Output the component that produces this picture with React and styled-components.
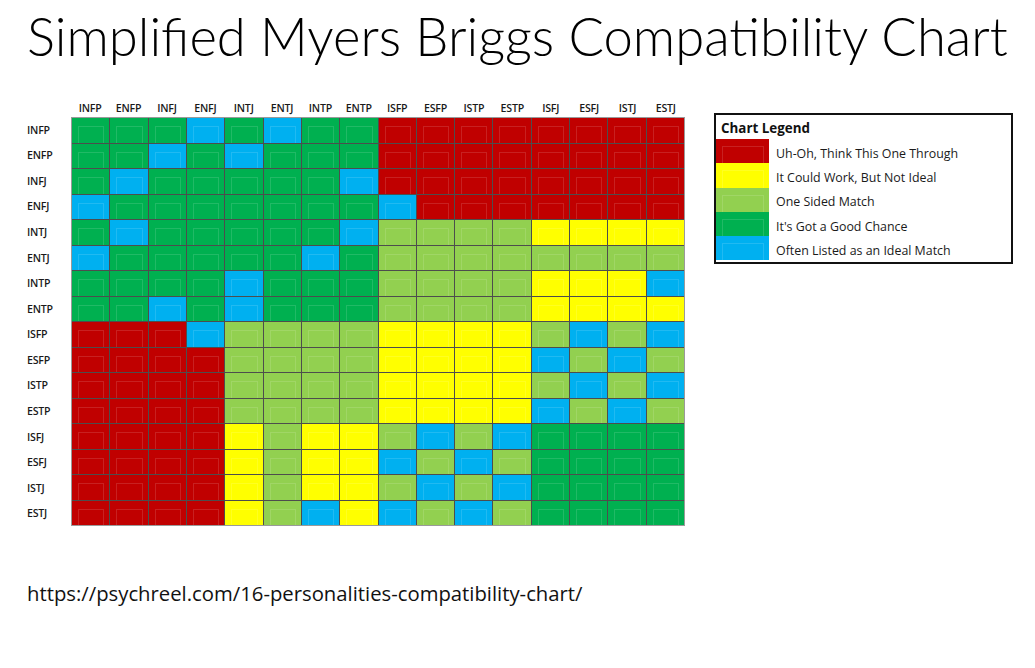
import styled, { createGlobalStyle } from 'styled-components';

const TYPES = ['INFP', 'ENFP', 'INFJ', 'ENFJ', 'INTJ', 'ENTJ', 'INTP', 'ENTP', 'ISFP', 'ESFP', 'ISTP', 'ESTP', 'ISFJ', 'ESFJ', 'ISTJ', 'ESTJ'];

const COLORS = {
  R: '#c00000',
  Y: '#ffff00',
  L: '#92d050',
  G: '#00b050',
  B: '#00b0f0',
};

// one string per row, one letter per column (same order as TYPES)
const MATRIX = [
  'GGGBGBGGRRRRRRRR',
  'GGBGBGGGRRRRRRRR',
  'GBGGGGGBRRRRRRRR',
  'BGGGGGGGBRRRRRRR',
  'GBGGGGGBLLLLYYYY',
  'BGGGGGBGLLLLLLLL',
  'GGGGBGGGLLLLYYYB',
  'GGBGBGGGLLLLYYYY',
  'RRRBLLLLYYYYLBLB',
  'RRRRLLLLYYYYBLBL',
  'RRRRLLLLYYYYLBLB',
  'RRRRLLLLYYYYBLBL',
  'RRRRYLYYLBLBGGGG',
  'RRRRYLYYBLBLGGGG',
  'RRRRYLYYLBLBGGGG',
  'RRRRYLBYBLBLGGGG',
];

const LEGEND = [
  { c: 'R', text: 'Uh-Oh, Think This One Through' },
  { c: 'Y', text: 'It Could Work, But Not Ideal' },
  { c: 'L', text: 'One Sided Match' },
  { c: 'G', text: "It's Got a Good Chance" },
  { c: 'B', text: 'Often Listed as an Ideal Match' },
];

const GlobalStyle = createGlobalStyle`
  html, body {
    margin: 0;
    padding: 0;
    background: #fff;
  }
  body {
    font-family: Lato, "Open Sans", sans-serif;
    color: #111;
  }
`;

const Page = styled.div`
  width: 1035px;
  height: 668px;
  padding: 0 0 0 27px;
  box-sizing: border-box;
  overflow: hidden;
`;

const Title = styled.h1`
  margin: 0;
  padding-top: 6px;
  font-family: Lato, sans-serif;
  font-weight: 300;
  font-size: 52.6px;
  line-height: 60px;
  color: #000;
  white-space: nowrap;
`;

const Body = styled.div`
  display: flex;
  align-items: flex-start;
  gap: 29px;
  margin-top: 35px;
`;

const Chart = styled.div`
  display: grid;
  grid-template-columns: 44px 614px;
  grid-template-rows: 16px 409px;
`;

const ColHeads = styled.div`
  grid-column: 2;
  display: grid;
  grid-template-columns: repeat(16, 1fr);
  align-items: end;
`;

const RowHeads = styled.div`
  grid-column: 1;
  display: grid;
  grid-template-rows: repeat(16, 1fr);
  align-items: center;
`;

const Label = styled.span`
  font-family: "Open Sans", sans-serif;
  font-weight: 600;
  font-size: 10.6px;
  line-height: 14px;
  color: #1a1a1a;
  letter-spacing: -0.2px;
  text-align: ${(p) => (p.$center ? 'center' : 'left')};
  padding-bottom: ${(p) => (p.$center ? '2px' : '0')};
`;

const Matrix = styled.div`
  display: grid;
  grid-template-columns: repeat(16, 1fr);
  grid-template-rows: repeat(16, 1fr);
  gap: 1px;
  background: #4d4d4d;
  border: 1px solid #9a9a9a;
`;

const Cell = styled.div`
  position: relative;
  background: ${(p) => COLORS[p.$c]};

  &::after {
    content: '';
    position: absolute;
    top: 8px;
    left: 6px;
    right: 5px;
    bottom: 0;
    border: 1px solid rgba(255, 255, 255, 0.13);
    border-bottom: none;
  }
`;

const Legend = styled.div`
  margin-top: 12px;
  width: 299px;
  box-sizing: border-box;
  border: 2px solid #111;
  padding-bottom: 2px;
`;

const LegendTitle = styled.div`
  font-family: "Open Sans", sans-serif;
  font-weight: 700;
  font-size: 13.4px;
  line-height: 24px;
  padding-left: 5px;
  padding-top: 1px;
  margin-bottom: -1px;
`;

const LegendRow = styled.div`
  display: flex;
  align-items: center;
  height: 24.3px;
`;

const Swatch = styled.div`
  position: relative;
  width: 53px;
  align-self: stretch;
  background: ${(p) => COLORS[p.$c]};

  &::after {
    content: '';
    position: absolute;
    top: 7px;
    left: 6px;
    right: 5px;
    bottom: 0;
    border: 1px solid rgba(255, 255, 255, 0.13);
    border-bottom: none;
  }
`;

const LegendText = styled.span`
  margin-left: 7px;
  padding-top: 4px;
  font-family: "Open Sans", sans-serif;
  font-size: 12.4px;
  color: #1a1a1a;
`;

const Source = styled.div`
  margin-top: 54px;
  font-family: "Open Sans", sans-serif;
  font-size: 20.3px;
  line-height: 26px;
  color: #111;
`;

export default function App() {
  return (
    <Page>
      <GlobalStyle />
      <Title>Simplified Myers Briggs Compatibility Chart</Title>
      <Body>
        <Chart>
          <div />
          <ColHeads>
            {TYPES.map((t) => (
              <Label key={t} $center>
                {t}
              </Label>
            ))}
          </ColHeads>
          <RowHeads>
            {TYPES.map((t) => (
              <Label key={t}>{t}</Label>
            ))}
          </RowHeads>
          <Matrix>
            {MATRIX.map((row, r) =>
              row.split('').map((c, i) => <Cell key={`${r}-${i}`} $c={c} />)
            )}
          </Matrix>
        </Chart>
        <Legend>
          <LegendTitle>Chart Legend</LegendTitle>
          {LEGEND.map((item) => (
            <LegendRow key={item.c}>
              <Swatch $c={item.c} />
              <LegendText>{item.text}</LegendText>
            </LegendRow>
          ))}
        </Legend>
      </Body>
      <Source>https://psychreel.com/16-personalities-compatibility-chart/</Source>
    </Page>
  );
}
